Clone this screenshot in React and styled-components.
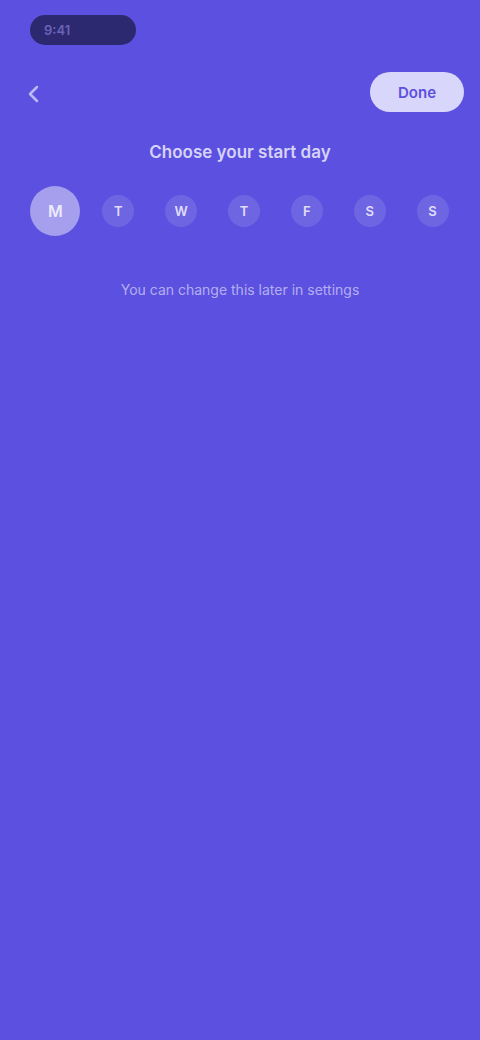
import styled, { createGlobalStyle } from 'styled-components'

const Global = createGlobalStyle`
  html, body {
    margin: 0;
    padding: 0;
    background: #5b50e0;
  }
  body {
    font-family: Inter, "Noto Sans", sans-serif;
    color: #fff;
  }
`;

const Screen = styled.div`
  width: 480px;
  min-height: 1040px;
  background: #5b50e0;
  box-sizing: border-box;
`;

const StatusBar = styled.div`
  height: 60px;
  padding: 15px 0 0 30px;
  box-sizing: border-box;
`;

const TimePill = styled.div`
  width: 106px;
  height: 30px;
  border-radius: 15px;
  background: #2d2970;
  display: flex;
  align-items: center;
  padding-left: 14px;
  box-sizing: border-box;
  font-size: 13px;
  font-weight: 600;
  color: #6a63b8;
`;

const TopBar = styled.div`
  display: flex;
  align-items: center;
  justify-content: space-between;
  padding: 12px 16px 0 16px;
  height: 40px;
`;

const BackButton = styled.button`
  width: 36px;
  height: 36px;
  margin-top: 4px;
  border: 0;
  padding: 0;
  background: transparent;
  display: flex;
  align-items: center;
  justify-content: center;
  color: rgba(255, 255, 255, 0.6);
`;

const DoneButton = styled.button`
  width: 94px;
  height: 40px;
  border: 0;
  border-radius: 20px;
  background: #d9d6fb;
  color: #5b50e0;
  font-family: Inter, sans-serif;
  font-size: 15px;
  font-weight: 600;
`;

const Title = styled.h1`
  margin: 28px 0 0;
  text-align: center;
  font-size: 17px;
  font-weight: 600;
  color: rgba(255, 255, 255, 0.75);
  line-height: 24px;
`;

const DayRow = styled.div`
  display: grid;
  grid-template-columns: repeat(7, 1fr);
  justify-items: center;
  align-items: center;
  padding: 0 16px 0 24px;
  margin-top: 22px;
  height: 50px;
`;

const Day = styled.div`
  width: ${p => (p.$active ? 50 : 32)}px;
  height: ${p => (p.$active ? 50 : 32)}px;
  border-radius: 50%;
  background: ${p => (p.$active ? 'rgba(255,255,255,0.45)' : 'rgba(255,255,255,0.12)')};
  display: flex;
  align-items: center;
  justify-content: center;
  font-size: ${p => (p.$active ? 16 : 13)}px;
  font-weight: 600;
  color: rgba(255, 255, 255, 0.8);
`;

const Caption = styled.p`
  margin: 44px 0 0;
  text-align: center;
  font-size: 14px;
  color: rgba(255, 255, 255, 0.55);
  line-height: 20px;
`;

const days = ['M', 'T', 'W', 'T', 'F', 'S', 'S'];

export default function App() {
  return (
    <Screen>
      <Global />
      <StatusBar>
        <TimePill>9:41</TimePill>
      </StatusBar>
      <TopBar>
        <BackButton aria-label="Back">
          <svg width="24" height="24" viewBox="0 0 24 24" fill="none" stroke="currentColor" strokeWidth="2.5" strokeLinecap="round" strokeLinejoin="round">
            <path d="M15 5l-7 7 7 7" />
          </svg>
        </BackButton>
        <DoneButton>Done</DoneButton>
      </TopBar>
      <Title>Choose your start day</Title>
      <DayRow>
        {days.map((d, i) => (
          <Day key={i} $active={i === 0}>{d}</Day>
        ))}
      </DayRow>
      <Caption>You can change this later in settings</Caption>
    </Screen>
  );
}
